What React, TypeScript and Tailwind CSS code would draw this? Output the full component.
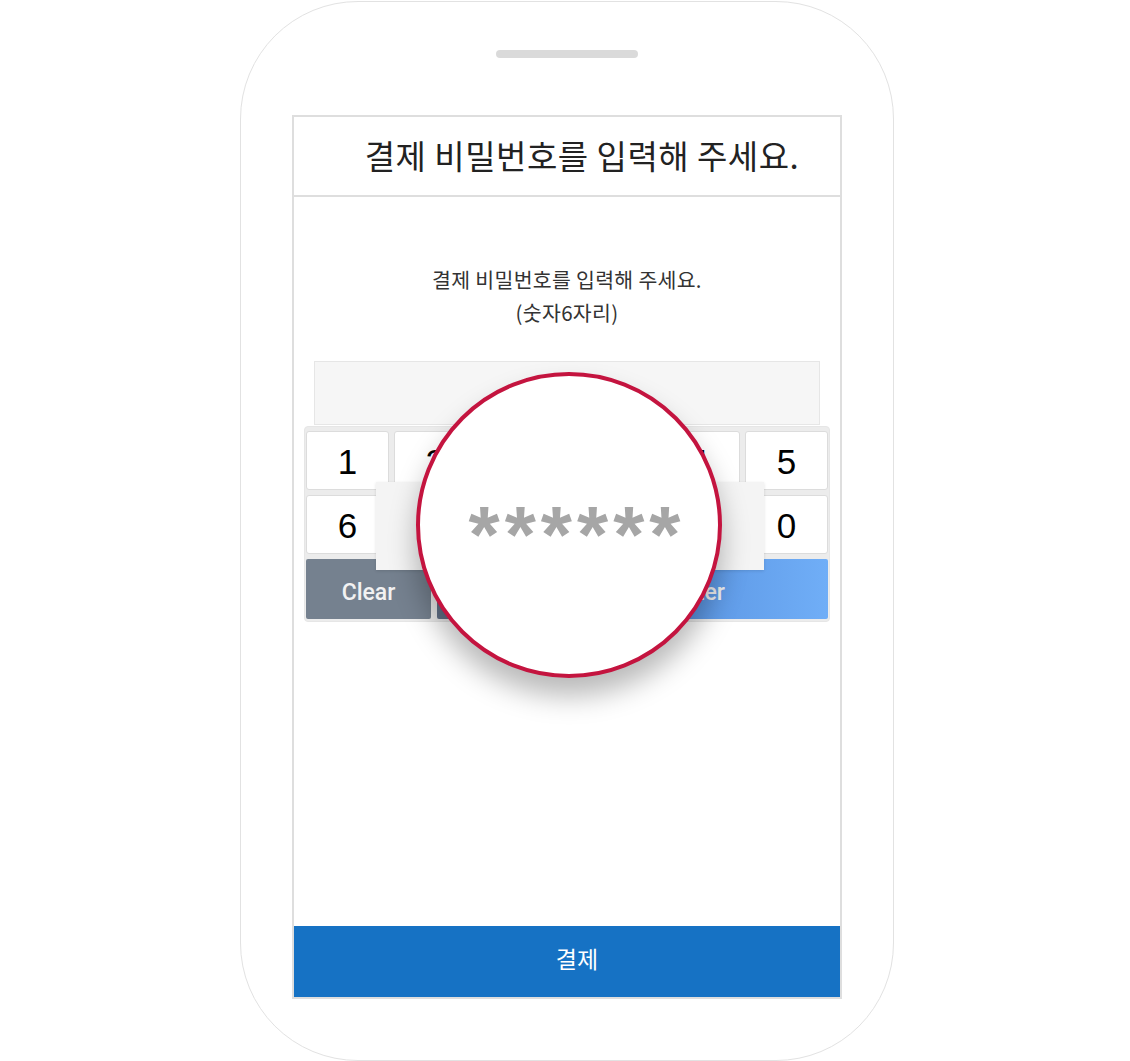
import React from 'react';

const KR = { fontFamily: '"Noto Sans CJK KR", "Noto Sans", sans-serif' };

const rowOne = ['1', '2', '3', '', '4', '5'];
const rowTwo = ['6', '7', '8', '9', '', '0'];

export default function App() {
  return (
    <div className="w-[1130px] h-[1061px] bg-white pl-[240px] pt-px">
      {/* phone body */}
      <div className="w-[654px] h-[1060px] border border-[#e2e2e2] rounded-[118px] px-[51px] flex flex-col items-center">
        <div className="mt-[48px] w-[142px] h-[8px] rounded-full bg-[#dadada]" />

        {/* screen */}
        <div className="relative mt-[57px] w-full h-[884px] border-2 border-[#dedede] flex flex-col bg-white">
          <div
            className="h-[80px] border-b-2 border-[#dedede] flex items-center justify-center pl-[30px] text-[33px] tracking-[0.5px] text-[#222]"
            style={KR}
          >
            결제 비밀번호를 입력해 주세요.
          </div>

          <div className="flex-1 flex flex-col">
            <div className="mt-[66px] text-center text-[20.5px] tracking-[0.3px] leading-[33px] text-[#333]" style={KR}>
              <p>결제 비밀번호를 입력해 주세요.</p>
              <p>(숫자6자리)</p>
            </div>

            <div className="mt-[32px] mx-[20px] h-[64px] bg-[#f6f6f6] border border-[#e6e6e6]" />

            <Keypad />
          </div>

          <button
            className="h-[71px] w-full bg-[#1672c4] text-white text-[23px] flex items-center justify-center pl-[20px] pb-[6px]"
            style={KR}
          >
            결제
          </button>

          {/* entered-value popup */}
          <div className="absolute left-[82px] top-[365px] w-[388px] h-[88px] bg-[#f4f4f4] shadow-[0_1px_3px_rgba(0,0,0,0.12)]" />

          {/* magnifier */}
          <div className="absolute left-[122px] top-[255px] w-[306px] h-[306px] rounded-full bg-white border-[4px] border-[#c4143f] shadow-[0_18px_28px_rgba(0,0,0,0.28)] flex items-center justify-center">
            <span
              className="pl-[16px] text-[#a6a6a6] font-bold text-[80px] leading-none tracking-[5px] mt-[20px]"
              style={{ fontFamily: '"Liberation Sans", Arial, sans-serif' }}
            >
              ******
            </span>
          </div>
        </div>
      </div>
    </div>
  );
}

function Keypad() {
  return (
    <div className="mt-px mx-[10px] bg-[#ececec] rounded-[4px] border border-[#e6e6e6] px-px pt-[4px] pb-[2px] flex flex-col gap-[5px]">
      <KeyRow keys={rowOne} />
      <KeyRow keys={rowTwo} />
      <div className="grid grid-cols-[125px_125px_1fr] gap-[6px] h-[60px]" style={{ fontFamily: 'Roboto, Arial, sans-serif' }}>
        <button className="rounded-[2px] bg-[#75818f] text-[#f2f2f2] text-[23px] font-medium pt-[8px]">Clear</button>
        <button className="rounded-[2px] bg-[#637289] text-[#f2f2f2] text-[23px] font-medium pt-[8px]">←</button>
        <button className="rounded-[2px] bg-gradient-to-r from-[#4c84d4] to-[#70aef7] text-[#f2f2f2] text-[23px] font-medium pt-[8px]">Enter</button>
      </div>
    </div>
  );
}

function KeyRow({ keys }: { keys: string[] }) {
  return (
    <div className="grid grid-cols-6 gap-[5px]">
      {keys.map((k, i) => (
        <div
          key={i}
          className="h-[59px] pt-[4px] bg-white border border-[#dcdcdc] rounded-[3px] flex items-center justify-center text-[35px] text-black"
          style={{ fontFamily: '"Liberation Sans", Arial, sans-serif' }}
        >
          {k}
        </div>
      ))}
    </div>
  );
}
